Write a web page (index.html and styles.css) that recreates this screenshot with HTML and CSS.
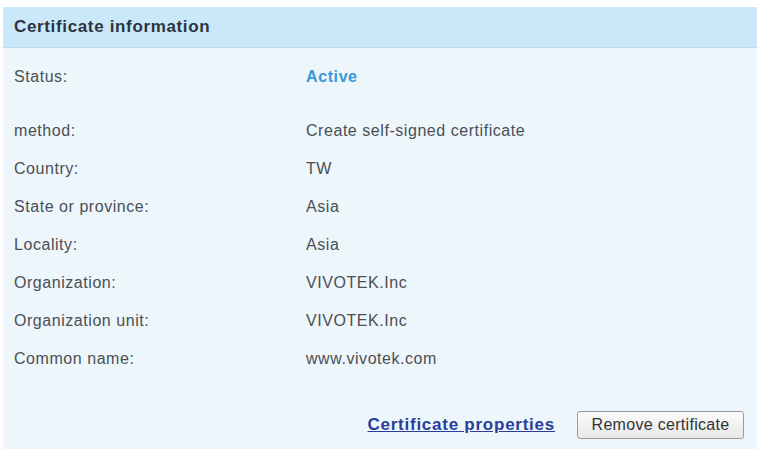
FILE: index.html
```html
<!DOCTYPE html>
<html>
<head>
<meta charset="utf-8">
<link rel="stylesheet" href="styles.css">
</head>
<body>
<div class="panel">
  <div class="panel-header">Certificate information</div>
  <div class="panel-body">
    <div class="row row-status"><span class="label">Status:</span><span class="value active">Active</span></div>
    <div class="row"><span class="label">method:</span><span class="value">Create self-signed certificate</span></div>
    <div class="row"><span class="label">Country:</span><span class="value">TW</span></div>
    <div class="row"><span class="label">State or province:</span><span class="value">Asia</span></div>
    <div class="row"><span class="label">Locality:</span><span class="value">Asia</span></div>
    <div class="row"><span class="label">Organization:</span><span class="value">VIVOTEK.Inc</span></div>
    <div class="row"><span class="label">Organization unit:</span><span class="value">VIVOTEK.Inc</span></div>
    <div class="row"><span class="label">Common name:</span><span class="value">www.vivotek.com</span></div>
    <div class="actions">
      <a class="link" href="#">Certificate properties</a>
      <button class="btn" type="button">Remove certificate</button>
    </div>
  </div>
</div>
</body>
</html>
```

FILE: styles.css
```css
html, body {
  margin: 0;
  padding: 0;
  background: #ffffff;
  height: 100%;
  overflow: hidden;
}
body {
  font-family: "Liberation Sans", Arial, sans-serif;
  font-size: 16px;
  letter-spacing: 0.55px;
  color: #4a4f55;
}
.panel {
  margin: 7px 5px 0 3px;
  display: flex;
  flex-direction: column;
  height: 442px;
  background: #edf6fb;
}
.panel-header {
  height: 40px;
  line-height: 40px;
  padding-left: 11px;
  background: #cbe8fb;
  border-bottom: 1px solid #bcdcf2;
  font-weight: bold;
  font-size: 17px;
  letter-spacing: 0.65px;
  color: #2c3440;
}
.panel-body {
  padding: 10px 13px 0 11px;
  display: flex;
  flex-direction: column;
}
.row {
  display: grid;
  grid-template-columns: 292px 1fr;
  height: 38px;
  align-items: center;
}
.row-status {
  margin-bottom: 16px;
}
.value.active {
  font-weight: bold;
  color: #3898d8;
  letter-spacing: 0.6px;
}
.actions {
  margin-top: 33px;
  display: flex;
  justify-content: flex-end;
  align-items: center;
  gap: 22px;
}
.link {
  font-weight: bold;
  font-size: 17px;
  letter-spacing: 0.75px;
  color: #2b3d9c;
  text-decoration: underline;
}
.btn {
  font-family: "Liberation Sans", Arial, sans-serif;
  font-size: 16px;
  letter-spacing: 0.3px;
  color: #333;
  height: 28px;
  width: 167px;
  padding: 0;
  border: 1px solid #9a9a9a;
  border-radius: 3px;
  background: linear-gradient(#fbfbfb, #e8e8e8);
}
```
